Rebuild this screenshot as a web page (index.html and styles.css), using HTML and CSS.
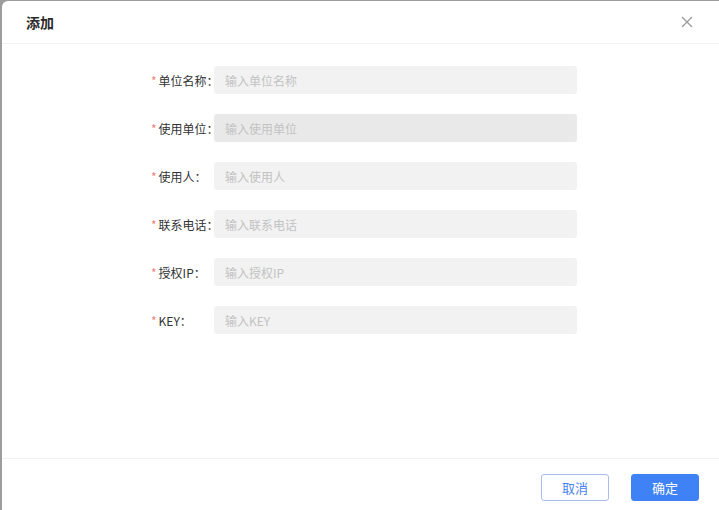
FILE: index.html
```html
<!DOCTYPE html>
<html lang="zh-CN">
<head>
<meta charset="utf-8">
<title>添加</title>
<link rel="stylesheet" href="styles.css">
</head>
<body>
<div class="dialog">
  <div class="dialog-header">
    <span class="dialog-title">添加</span>
    <button class="close-btn" aria-label="关闭">
      <svg width="12" height="12" viewBox="0 0 12 12"><path d="M1 1L11 11M11 1L1 11" stroke="#9a9a9a" stroke-width="1.3" fill="none"/></svg>
    </button>
  </div>
  <div class="dialog-body">
    <div class="form-row">
      <label class="form-label"><span class="req">*</span>单位名称：</label>
      <input class="form-input" placeholder="输入单位名称">
    </div>
    <div class="form-row">
      <label class="form-label"><span class="req">*</span>使用单位：</label>
      <input class="form-input disabled" placeholder="输入使用单位" disabled>
    </div>
    <div class="form-row">
      <label class="form-label"><span class="req">*</span>使用人：</label>
      <input class="form-input" placeholder="输入使用人">
    </div>
    <div class="form-row">
      <label class="form-label"><span class="req">*</span>联系电话：</label>
      <input class="form-input" placeholder="输入联系电话">
    </div>
    <div class="form-row">
      <label class="form-label"><span class="req">*</span>授权IP：</label>
      <input class="form-input" placeholder="输入授权IP">
    </div>
    <div class="form-row">
      <label class="form-label"><span class="req">*</span>KEY：</label>
      <input class="form-input" placeholder="输入KEY">
    </div>
  </div>
  <div class="dialog-footer">
    <button class="btn btn-cancel">取消</button>
    <button class="btn btn-primary">确定</button>
  </div>
</div>
</body>
</html>
```
FILE: styles.css
```css
* { box-sizing: border-box; }
html, body { height: 100%; }
body {
  margin: 0;
  padding: 1px 0 0 2px;
  background: #9c9c9c;
  overflow: hidden;
  font-family: "Noto Sans CJK SC", "Noto Sans", sans-serif;
}
.dialog {
  width: 722px;
  height: 520px;
  background: #fff;
  border-radius: 6px;
  display: flex;
  flex-direction: column;
}
.dialog-header {
  height: 43px;
  flex: none;
  display: flex;
  align-items: center;
  justify-content: space-between;
  padding: 0 31px 0 24px;
  border-bottom: 1px solid #f2f2f2;
}
.dialog-title {
  font-size: 14px;
  font-weight: 600;
  color: #2b2b2b;
}
.close-btn {
  border: 0;
  background: none;
  padding: 0;
  width: 12px;
  height: 12px;
  display: flex;
}
.dialog-body {
  flex: 1;
  padding: 22px 0 0 146px;
  display: flex;
  flex-direction: column;
  gap: 20px;
}
.form-row {
  display: flex;
  align-items: center;
  height: 28px;
}
.form-label {
  width: 66px;
  flex: none;
  font-size: 12px;
  color: #333;
  padding-left: 3px;
  white-space: nowrap;
}
.req {
  color: #f08080;
  margin-right: 2px;
  font-size: 12px;
}
.form-input {
  width: 363px;
  height: 28px;
  border: 0;
  border-radius: 3px;
  background: #f2f2f2;
  padding: 0 11px;
  font-size: 12px;
  font-family: inherit;
  color: #333;
  outline: none;
}
.form-input.disabled { background: #e9e9e9; }
.form-input::placeholder { color: #c2c2c2; }
.dialog-footer {
  flex: none;
  height: 63px;
  border-top: 1px solid #f2f2f2;
  display: flex;
  justify-content: flex-end;
  align-items: flex-start;
  gap: 22px;
  padding: 15px 25px 0 0;
}
.btn {
  width: 68px;
  height: 27px;
  border-radius: 3px;
  font-size: 13px;
  font-family: inherit;
  cursor: pointer;
}
.btn-cancel {
  background: #fff;
  border: 1px solid #a9bdf2;
  color: #4b82f2;
}
.btn-primary {
  background: #3f82f5;
  border: 1px solid #3f82f5;
  color: #fff;
}
```
